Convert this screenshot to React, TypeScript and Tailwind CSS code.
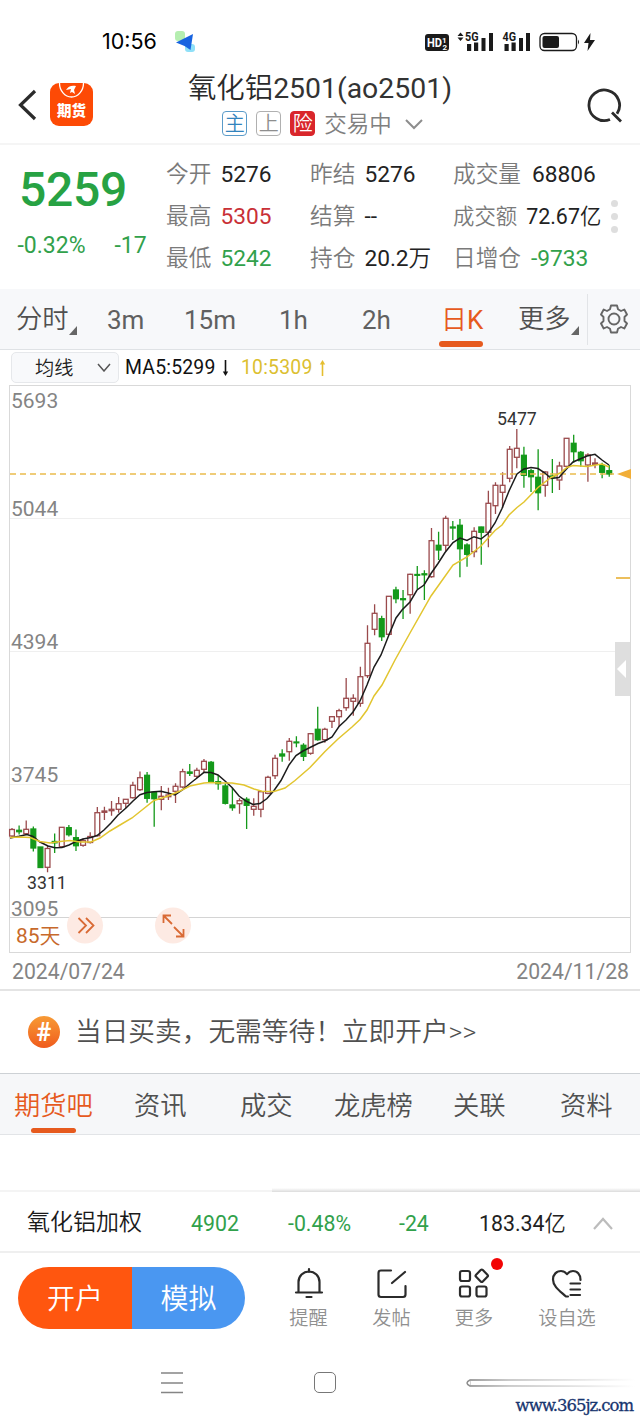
import { ReactNode } from "react";

type Candle = [number, number, number, number, "r" | "g"];

// high, body top, body bottom, low, direction
const candles: Candle[] = [
  [828, 829.5, 836, 838, "r"], [825.5, 830.3, 831.7, 834.5, "g"], [820.5, 829.3, 833.7, 835, "r"],
  [826.5, 829, 848, 851.5, "g"], [847, 847, 867.5, 867.5, "g"], [845, 848.5, 867.3, 872.3, "r"],
  [833.5, 841.5, 842.8, 853, "g"], [827.3, 827.3, 846.7, 847, "r"], [825, 827.7, 834.7, 836.5, "g"],
  [829.5, 837.7, 845.7, 851, "g"], [838.5, 840.7, 845.3, 846.7, "r"], [832.3, 836.5, 842.5, 843.5, "r"],
  [807, 812.7, 835.7, 836.5, "r"], [806.7, 811, 812.3, 820, "r"], [801, 809.3, 810.7, 815.7, "r"],
  [797, 803.7, 809.3, 812.7, "r"], [799, 799.3, 803.3, 808, "r"], [781.7, 785.3, 797.7, 798.5, "r"],
  [771.5, 777.7, 789.7, 791, "r"], [772, 775.3, 798.3, 802.7, "g"], [792, 792.3, 798.7, 826.7, "g"],
  [786, 796.3, 799.3, 810.3, "r"], [787.7, 795, 796.7, 800, "r"], [783.3, 786.3, 791.3, 803, "r"],
  [768.7, 771.7, 787, 788.3, "r"], [764, 772, 773.3, 776, "g"], [767.7, 770.3, 776.3, 778.3, "r"],
  [759, 761.3, 769.3, 772.3, "r"], [761, 762.3, 782, 782.7, "g"], [775, 781.7, 783.7, 789.7, "g"],
  [783.5, 786, 803.3, 804.5, "g"], [787.7, 805, 807.7, 810.7, "g"], [798.3, 800.7, 803.7, 813.7, "r"],
  [797.3, 799.3, 805.3, 829, "g"], [798.3, 806.3, 809.3, 815.7, "r"], [791.7, 791.7, 809.3, 817.3, "r"],
  [775.7, 777.3, 793.3, 794.3, "r"], [754.7, 758.3, 775.7, 779, "r"], [749.3, 754, 756, 761.7, "g"],
  [738, 741.3, 751.7, 760.7, "r"], [736.3, 742, 742.8, 747.3, "g"], [743.3, 745.3, 756.3, 761, "g"],
  [733, 733.7, 753.3, 754.7, "r"], [706.7, 729.3, 739.7, 740.7, "g"], [727.7, 729.3, 739.7, 742.7, "r"],
  [716, 716.7, 721.3, 728, "r"], [708.7, 710.7, 716.7, 726.7, "r"], [678, 698.3, 707.7, 710.7, "r"],
  [694.3, 698.3, 701.3, 715.7, "r"], [666.7, 676.7, 703.3, 706.7, "r"], [625.3, 643.3, 675.7, 678, "r"],
  [604.3, 613.3, 629.3, 635.3, "r"], [615.7, 618.7, 636.7, 641, "g"], [596.3, 596.3, 634.3, 635, "r"],
  [586.7, 590, 598.7, 603.3, "g"], [590, 598.7, 599.7, 619, "g"], [573.7, 574.3, 594.7, 613.7, "r"],
  [566, 574.5, 575.3, 589, "g"], [570.3, 573.8, 574.8, 600, "g"], [528, 540.7, 576.7, 577.7, "r"],
  [531.7, 545.3, 550, 560, "g"], [515.7, 518.3, 545.3, 551, "r"], [521, 527, 528, 540, "g"],
  [519, 525.3, 548.7, 577.3, "g"], [543.3, 545, 554.3, 566.7, "g"], [527.3, 531.3, 551.7, 557.3, "r"],
  [526.7, 527, 532.3, 564.7, "g"], [490.7, 503.3, 532.3, 547.3, "r"], [482.3, 485.3, 505.7, 514, "r"],
  [472.3, 485.3, 492.3, 508, "r"], [446, 449.3, 478.3, 482.3, "r"], [429, 448.3, 457.3, 468.3, "r"],
  [446.7, 455.3, 475.3, 487.7, "g"], [469, 470.7, 476.7, 492, "g"], [449.3, 477.3, 492.7, 510.3, "g"],
  [471.3, 472, 485.3, 496.7, "r"], [459, 476, 477, 493, "g"], [461.7, 466, 480, 490, "r"],
  [438.3, 438.3, 466.3, 467, "r"], [434.7, 443.3, 451.7, 462.7, "g"], [451, 452.3, 460.7, 466.7, "g"],
  [453.3, 455, 465, 481.7, "r"], [458.3, 463, 464.3, 468.3, "r"], [462.7, 465.3, 472.3, 478.3, "g"],
  [465, 470.7, 474, 476.7, "g"],
];

const ma5 =
  "10,838 19,836.3 27,834.5 33,836.5 40,842 48,846 55,847.8 62,847.5 69,845 76,841.5 83,839 91,837.5 97,835.5 104,830 111,823 118,815 126,808 133,801 140,794.7 147,792.5 154,791.7 161,791.2 168,793 175,795 183,789.5 190,783.5 197,778 204,772.3 211,772.5 218,775 225,781 232,787.5 239,796 246,801 253,804.5 260,803.5 267,798.5 274,790.5 281,780.5 289,765 296,755.5 303,751 310,747.5 318,743.5 325,741 332,737 339,726.5 346,720 353,712 360,701 367,685 374,667 381,655 388.7,635.5 396,618 402,610 410,602 417,590 424,585 431,573.5 438,563.5 445,552.5 453,542.5 460,538 467,540.5 474,536.7 481,539 488,533.5 495,523 502,508.5 509,491 517,474 524,469 531,467.5 538,468.5 545,473 551,478.5 559,477.5 566,469.5 573,462 580,459 587,456 595,454.3 602,460 609,465";

const ma10 =
  "10,837.5 20,837 30,837.5 40,841.5 50,843 60,841.5 70,840.5 80,842 91,842 100,838 110,831 120,825 132,818 142,810 154,800.5 168,796 180,791 190,786 204,783 211,782.5 218,783 232,783 244,785 254,789 262,791.3 274,791.5 285,788 295,780.5 310,767.5 325,751.5 338,739 352,727 360,719.5 367,710 374,696 382,685 395,660 410,633 431,596 453,565 467,557 481,546 495,530.5 502,525 509,515 517,507.5 524,502 538,487.5 551,477.5 560,473 567,467.5 573,465.5 587,466.5 602,464 609,467";

function StatusBar() {
  return (
    <div className="flex h-[62px] items-center pt-[21px] pl-[102px]">
      <span className="font-['Inter',sans-serif] text-[21.5px] leading-none text-black">10:56</span>
      <svg className="ml-[15px]" width="26" height="24" viewBox="0 0 26 24">
        <rect x="3" y="1" width="10" height="10" rx="3" fill="#b5eeb0" />
        <rect x="13" y="14" width="10" height="8" rx="3" fill="#8fe0f8" />
        <path d="M4 12.500 21 4 18.500 20 12.500 16Z" fill="#1763e0" />
      </svg>
      <svg className="ml-[226px]" width="172" height="24" viewBox="425 29 172 24" fill="#1a1a1a">
        <rect x="426" y="33" width="24" height="17" rx="3" />
        <text x="428" y="46.300" fontSize="13" fontWeight="700" fill="#fff" textLength="15" lengthAdjust="spacingAndGlyphs">HD</text>
        <text x="443" y="41.500" fontSize="8" fontWeight="700" fill="#fff">1</text>
        <text x="443.500" y="48.500" fontSize="8" fontWeight="700" fill="#fff">2</text>
        <path d="M458.500 35l3-3.500 3 3.500zM458.500 36.500l3 3.500 3-3.500z" />
        <text x="466" y="40" fontSize="12" fontWeight="700" textLength="13.500" lengthAdjust="spacingAndGlyphs">5G</text>
        <path d="M468 43h4.200v7h-4.200zM475 41.500h4.200v8.500h-4.200zM482.500 37h4v13h-4zM490 32h4v18h-4z" />
        <text x="503.500" y="40" fontSize="12" fontWeight="700" textLength="13.500" lengthAdjust="spacingAndGlyphs">4G</text>
        <path d="M505.500 43h4.200v7h-4.200zM512.500 41.500h4.200v8.500h-4.200zM520 37h4v13h-4zM527 32h4v18h-4z" />
        <rect x="541" y="32.500" width="36.500" height="17" rx="4.500" fill="none" stroke="#1a1a1a" strokeWidth="1.300" />
        <rect x="543.500" y="35" width="16.500" height="12" rx="2" />
        <path d="M579 38.500q2 2.500 0 5z" />
        <path d="M591.500 32 585 42h4.500l-1 8 7.500-11h-5z" />
      </svg>
    </div>
  );
}

function Tag({ className, children }: { className: string; children: ReactNode }) {
  return (
    <span className={`flex size-[25px] items-center justify-center rounded-[4px] border text-[20px] leading-none font-[350] ${className}`}>
      <span className="mt-[1px]">{children}</span>
    </span>
  );
}

function Header() {
  return (
    <header className="flex h-[83px] border-b-2 border-[#f5f5f5]">
      <div className="flex w-[160px] items-start pl-[17px]">
        <svg className="mt-[27px]" width="20" height="32" viewBox="0 0 20 32" fill="none" stroke="#2b2b2b" strokeWidth="3.200">
          <path d="M18 2 3.500 16 18 30" />
        </svg>
        <div className="relative mt-[21px] ml-[13px] flex h-[43px] w-[43px] items-end justify-center rounded-[9px] bg-[#fd4a05] pb-[7px]">
          <svg className="absolute top-0 left-0" width="43" height="16" viewBox="0 0 43 16" fill="none" stroke="#fff">
            <path d="M9.500 0a12 14 0 0 0 24 0" strokeWidth="1.300" />
            <path d="M16 7c2-4 6-5 10-4l-2 4 1 4-3-2-2 1 1-4z" fill="#fff" stroke="none" />
          </svg>
          <span className="text-[14.500px] leading-none font-black text-white">期货</span>
        </div>
      </div>
      <div className="flex w-[320px] flex-col items-center pt-[9px]">
        <h1 className="text-[28.400px] leading-[36px] font-[350] whitespace-nowrap text-[#2a2a2a]">
          氧化铝<span className="font-normal text-[#333]">2501(ao2501)</span>
        </h1>
        <div className="mt-[3px] ml-[6px] flex items-center">
          <Tag className="border-[#5a9bc9] text-[#3283bd]">主</Tag>
          <Tag className="ml-[9px] border-[#b0b0b0] text-[#8e8e8e]">上</Tag>
          <Tag className="ml-[9px] border-[#d9262b] bg-[#d9262b] text-white">险</Tag>
          <span className="mt-[1px] ml-[9px] text-[22.500px] leading-[26px] font-[350] text-[#808080]">交易中</span>
          <svg className="ml-[12px]" width="20" height="12" viewBox="0 0 20 12" fill="none" stroke="#8d8d8d" strokeWidth="2">
            <path d="M2 2l8 8 8-8" />
          </svg>
        </div>
      </div>
      <svg className="mt-[25px] ml-[106px]" width="38" height="38" viewBox="586 87 38 38" fill="none" stroke="#2b2b2b" strokeWidth="2.800">
        <path d="M610 119.500A15.300 15.300 0 1 1 617 113.800M612 112.500l9 9" />
      </svg>
    </header>
  );
}

function Quote({ label, value, unit, tone = "text-[#222]", gap = "ml-[9px]" }: { label: string; value: string; unit?: string; tone?: string; gap?: string }) {
  return (
    <div className="flex h-[42px] items-center text-[22.700px] whitespace-nowrap">
      <span className="font-[350] text-[#7a7a7a]">{label}</span>
      <span className={`${gap} ${tone}`}>
        {value}
        {unit && <span className="font-[350]">{unit}</span>}
      </span>
    </div>
  );
}

function Quotes() {
  return (
    <section className="flex h-[144px] pt-[9px]">
      <div className="w-[166px]">
        <p className="mt-[7px] ml-[19px] text-[48px] leading-[58px] font-medium tracking-[-0.300px] text-[#27a243]">5259</p>
        <p className="mt-[14px] flex pl-[17.500px] text-[23px] leading-[26px] text-[#31a14b]">
          <span className="w-[97px]">-0.32%</span>
          <span>-17</span>
        </p>
      </div>
      <div className="w-[144px]">
        <Quote label="今开" value="5276" />
        <Quote label="最高" value="5305" tone="text-[#c93036]" />
        <Quote label="最低" value="5242" tone="text-[#31a14b]" />
      </div>
      <div className="w-[143px]">
        <Quote label="昨结" value="5276" />
        <Quote label="结算" value="--" />
        <Quote label="持仓" value="20.2" unit="万" />
      </div>
      <div className="w-[155px]">
        <Quote label="成交量" value="68806" gap="ml-[11px]" />
        <div className="flex h-[42px] items-center text-[21.400px] whitespace-nowrap">
          <span className="font-[350] text-[#7a7a7a]">成交额</span>
          <span className="ml-[9px] text-[#222]">
            72.67<span className="font-[350]">亿</span>
          </span>
        </div>
        <Quote label="日增仓" value="-9733" tone="text-[#31a14b]" gap="ml-[10px]" />
      </div>
      <div className="flex flex-col gap-[6px] pt-[46px] pl-[3px]">
        <i className="size-[7px] rounded-full bg-[#dedede]" />
        <i className="size-[7px] rounded-full bg-[#dedede]" />
        <i className="size-[7px] rounded-full bg-[#dedede]" />
      </div>
    </section>
  );
}

function Corner() {
  return (
    <svg className="mt-[20px]" width="8" height="9" viewBox="0 0 8 9">
      <path d="M8 0v9H0z" fill="#666" />
    </svg>
  );
}

function PeriodTabs() {
  return (
    <nav className="grid h-[61px] grid-cols-[91px_77px_95px_83px_79px_77px_69px_53px] items-center border-b border-[#dfe2e5] bg-[#f7f8fa] pt-[2px] pl-4 text-[26px] text-[#606060]">
      <span className="flex items-center text-[26.300px] font-[350] text-[#505050]">分时<Corner /></span>
      <span>3m</span>
      <span>15m</span>
      <span>1h</span>
      <span>2h</span>
      <span className="relative text-[#e65a1e]">
        <span className="font-[350]">日</span>K
        <i className="absolute -bottom-[7px] -left-[2px] h-[6px] w-[44px] rounded-full bg-[#e65a1e]" />
      </span>
      <span className="flex items-center text-[26.300px] font-[350] text-[#505050]">更多<Corner /></span>
      <span className="-mt-[2px] flex h-[51px] items-center self-center border-l border-[#e2e4e7] pl-[12px]">
        <svg width="28" height="30" viewBox="-14 -15 28 30" fill="none" stroke="#666" strokeWidth="1.900" strokeLinejoin="round">
          <path d="M-3-13.500H3L4-9.800 7-8 10.300-9.500 13-4.500 10.500-2V2L13 4.500 10.300 9.500 7 8 4 9.800 3 13.500H-3L-4 9.800-7 8-10.300 9.500-13 4.500-10.500 2V-2L-13-4.500-10.300-9.500-7-8-4-9.800Z" />
          <circle r="5.500" />
        </svg>
      </span>
    </nav>
  );
}

function IndicatorRow() {
  return (
    <div className="flex h-[35px] items-center pl-[11px] text-[19.400px] leading-none">
      <div className="flex h-[31px] w-[108px] items-center rounded-[5px] border border-[#e6e8eb] bg-[#f8f9fb] pl-[23px] text-[19.200px] text-[#222]">
        <span className="mt-[2px] font-[350]">均线</span>
        <svg className="ml-[24px]" width="14" height="9" viewBox="0 0 14 9" fill="none" stroke="#555" strokeWidth="1.500">
          <path d="M1 1l6 7 6-7" />
        </svg>
      </div>
      <span className="mt-[1px] ml-[6px] w-[91px] tracking-[0.200px] whitespace-nowrap text-[#111]">MA5:5299</span>
      <svg className="ml-[5px]" width="9" height="18" viewBox="0 0 9 18" stroke="#111" strokeWidth="1.600">
        <path d="M4.500 1v12" />
        <path d="M1.800 12.500h5.400L4.500 17z" fill="#111" stroke="none" />
      </svg>
      <span className="mt-[1px] ml-[11px] w-[72px] tracking-[0.200px] whitespace-nowrap text-[#dcbf30]">10:5309</span>
      <svg className="ml-[5px]" width="9" height="18" viewBox="0 0 9 18" stroke="#e5be2f" strokeWidth="1.600">
        <path d="M4.500 5v12" />
        <path d="M1.800 5.500h5.400L4.500 1z" fill="#e5be2f" stroke="none" />
      </svg>
    </div>
  );
}

function Chart() {
  return (
    <svg className="block" width="640" height="569" viewBox="0 385 640 569" fontSize="21">
      <g stroke="#efefef">
        <path d="M10 518.500H630M10 651.500H630M10 784.500H630" />
      </g>
      <path d="M10 917.500H630" stroke="#d4d4d4" />
      <rect x="9.500" y="385.500" width="621" height="567" fill="none" stroke="#d9d9d9" />
      {candles.map(([high, top, bottom, low, dir], i) => {
        const x = 12 + i * 7.11;
        const color = dir === "r" ? "#9a4a4c" : "#14991a";
        return (
          <g key={i} stroke={color} strokeWidth="1.300">
            <path d={`M${x} ${high}V${top}M${x} ${bottom}V${low}`} />
            <rect
              x={x - 2.4}
              y={top}
              width="4.800"
              height={bottom - top}
              fill={dir === "r" ? "#fff" : color}
            />
          </g>
        );
      })}
      <path d="M10 474H614" stroke="#eabc4e" strokeWidth="1.600" strokeDasharray="6 4" />
      <polyline points={ma5} fill="none" stroke="#1c1c1c" strokeWidth="1.500" />
      <polyline points={ma10} fill="none" stroke="#e2c52f" strokeWidth="1.500" />
      <path d="M617 474l14-5v10z" fill="#f1ae38" />
      <path d="M616 578H630" stroke="#eab84a" strokeWidth="1.800" />
      <rect x="615" y="642" width="15" height="54" fill="#dedede" />
      <path d="M617 669l9-9v18z" fill="#fff" />
      <g fill="#848484">
        <text x="11" y="408">5693</text>
        <text x="11" y="515.500">5044</text>
        <text x="11" y="648.500">4394</text>
        <text x="11" y="782">3745</text>
        <text x="11" y="915.500">3095</text>
      </g>
      <text x="497" y="424.500" fontSize="17.700" fill="#333">5477</text>
      <text x="27" y="889" fontSize="17.700" fill="#333">3311</text>
      <text x="16" y="943" fontSize="21" fill="#c7692b">
        85<tspan fontWeight="350">天</tspan>
      </text>
      <circle cx="85" cy="925.500" r="18" fill="#fdeae3" />
      <circle cx="173" cy="925.500" r="18" fill="#fdeae3" />
      <g fill="none" stroke="#d96a35" strokeWidth="1.800">
        <path d="M78.500 918l7.500 7.500-7.500 7.500M86 918l7.500 7.500-7.500 7.500" />
        <path d="M163.500 923v-7.500h7.500M163.500 915.500l8.500 8.500M183.500 929v7.500H176M183.500 936.500l-9.500-9.500" />
      </g>
    </svg>
  );
}

function Promo() {
  return (
    <section className="flex h-[84px] items-center border-t-2 border-[#e4e4e4] pl-[28px]">
      <span className="flex size-[32px] items-center justify-center rounded-full bg-linear-to-b from-[#f79a35] to-[#ef5a1c] text-[25px] leading-none font-bold text-white">
        #
      </span>
      <span className="ml-[15px] text-[26.700px] font-[350] whitespace-nowrap text-[#505050]">当日买卖，无需等待！立即开户&gt;&gt;</span>
    </section>
  );
}

function SectionTabs() {
  return (
    <nav className="grid h-[62px] grid-cols-[120px_106px_94px_119px_107px_80px] items-center border-y border-t-[#cdd1d5] border-b-[#e2e4e7] bg-[#f6f7f9] pt-[6px] pl-[14px] text-[26.300px] font-[350] whitespace-nowrap text-[#505050]">
      <span className="relative text-[#e65a1e]">
        期货吧
        <i className="absolute -bottom-[6px] left-[17px] h-[5px] w-[45px] rounded-full bg-[#e65a1e]" />
      </span>
      <span>资讯</span>
      <span>成交</span>
      <span>龙虎榜</span>
      <span>关联</span>
      <span>资料</span>
    </nav>
  );
}

function IndexRow() {
  return (
    <div className="flex h-[61px] items-center border-b-2 border-[#efefef] pt-[4px] pl-[27px] text-[21.300px] whitespace-nowrap text-[#31a14b]">
      <span className="w-[164px] text-[23px] font-[350] text-[#1a1a1a]">氧化铝加权</span>
      <span className="w-[97px]">4902</span>
      <span className="w-[111px]">-0.48%</span>
      <span className="w-[80px]">-24</span>
      <span className="w-[114px] text-[#222]">
        183.34<span className="font-[350]">亿</span>
      </span>
      <svg width="20" height="13" viewBox="0 0 20 13" fill="none" stroke="#bcbcbc" strokeWidth="2.200">
        <path d="M1 12l9-10 9 10" />
      </svg>
    </div>
  );
}

function Action({ label, width, children }: { label: string; width: string; children: ReactNode }) {
  return (
    <div className={`flex flex-col items-center ${width}`}>
      <svg width="34" height="34" viewBox="0 0 34 34" fill="none" stroke="#2b2b2b" strokeWidth="2.200" strokeLinecap="round" strokeLinejoin="round">
        {children}
      </svg>
      <span className="mt-[4px] text-[19.200px] leading-[28px] font-[350] whitespace-nowrap text-[#909090]">{label}</span>
    </div>
  );
}

function ActionBar() {
  return (
    <div className="flex h-[97px] pt-[14px] pl-[18px]">
      <div className="flex h-[62px] w-[227px] overflow-hidden rounded-full text-[28px] font-[350] text-white">
        <button className="w-[114px] bg-[#ff560f] pt-[4px]">开户</button>
        <button className="w-[113px] bg-[#4a97f1] pt-[4px]">模拟</button>
      </div>
      <div className="flex pl-[22px]">
        <Action label="提醒" width="w-[83px]">
          <path d="M17 2v3M6.500 24.500V15a10.500 10.500 0 0 1 21 0v9.500M4 25.500H30M14.500 30h5" />
        </Action>
        <Action label="发帖" width="w-[83px]">
          <path d="M16 3.500H6q-2.500 0-2.500 2.500v21.500q0 2.500 2.500 2.500h22q2.500 0 2.500-2.500V19M17 16 30 5" />
        </Action>
        <div className="relative">
          <Action label="更多" width="w-[82px]">
            <rect x="3" y="4" width="10" height="10" rx="2" />
            <rect x="3" y="19.500" width="10" height="10" rx="2" />
            <rect x="19.500" y="19.500" width="10" height="10" rx="2" />
            <rect x="20" y="4" width="9.500" height="9.500" rx="1.500" transform="rotate(45 24.750 8.750)" />
          </Action>
          <i className="absolute -top-[9px] left-[58px] size-[12px] rounded-full bg-[#f20505]" />
        </div>
        <Action label="设自选" width="w-[104px]">
          <path d="M30.500 13c0-6-3.500-9-7.500-9-2.500 0-4.500 1.200-6 3.200C15.500 5.200 13.500 4 11 4 6.500 4 3 7.500 3 12.500c0 7 7 11.500 13 17h2M20.500 16.500h9.500M20.500 22.500h9.500M20.500 28h9.500" />
        </Action>
      </div>
    </div>
  );
}

function SystemNav() {
  return (
    <div className="flex h-[72px] flex-col">
      <div className="flex h-[44px] pt-[20px] pl-[161px]">
        <svg width="23" height="24" viewBox="0 0 23 24" stroke="#858585" strokeWidth="1.600">
          <path d="M0 3h22M0 13h22M0 22.500h22" />
        </svg>
        <div className="mt-[2px] ml-[130px] h-[21px] w-[22px] rounded-[5px] border-[1.500px] border-[#777]" />
        <svg className="mt-[6px] ml-[127px]" width="175" height="14" viewBox="0 0 175 14" fill="none">
          <defs>
            <linearGradient id="fade" x1="0" y1="0" x2="1" y2="0">
              <stop offset="0" stopColor="#8b8b8b" />
              <stop offset="0.250" stopColor="#c4c4c4" />
              <stop offset="1" stopColor="#fff" />
            </linearGradient>
            <linearGradient id="glow" x1="0" y1="0" x2="1" y2="0">
              <stop offset="0" stopColor="#d4d4d4" />
              <stop offset="1" stopColor="#fff" />
            </linearGradient>
          </defs>
          <path d="M7 3H172V10.500H7z" fill="url(#glow)" />
          <path d="M8 5H172V9H8z" fill="#fff" />
          <path d="M172 3.500 7 4q-6 3 0 6L172 10.500" stroke="url(#fade)" strokeWidth="1.500" />
        </svg>
      </div>
      <span className="mt-[1px] self-end pr-[7px] font-['DejaVu_Serif',serif] text-[16.500px] leading-[22px] tracking-[-1.050px] text-[#17356f] [-webkit-text-stroke:0.300px_#17356f]">
        www.365jz.com
      </span>
    </div>
  );
}

export default function App() {
  return (
    <main className="flex h-[1422px] w-[640px] flex-col overflow-hidden bg-white font-['Roboto','Noto_Sans_CJK_SC',sans-serif]">
      <StatusBar />
      <Header />
      <Quotes />
      <PeriodTabs />
      <IndicatorRow />
      <Chart />
      <div className="flex h-[35px] items-center justify-between pr-[11px] pl-[12px] text-[21.200px] text-[#848484]">
        <span>2024/07/24</span>
        <span>2024/11/28</span>
      </div>
      <Promo />
      <SectionTabs />
      <div className="flex h-[57px] items-end">
        <div className="h-[2px] w-[272px] bg-[#f4f4f4]" />
        <div className="h-[4px] flex-1 bg-linear-to-b from-white to-[#dcdcdc]" />
      </div>
      <IndexRow />
      <ActionBar />
      <SystemNav />
    </main>
  );
}
